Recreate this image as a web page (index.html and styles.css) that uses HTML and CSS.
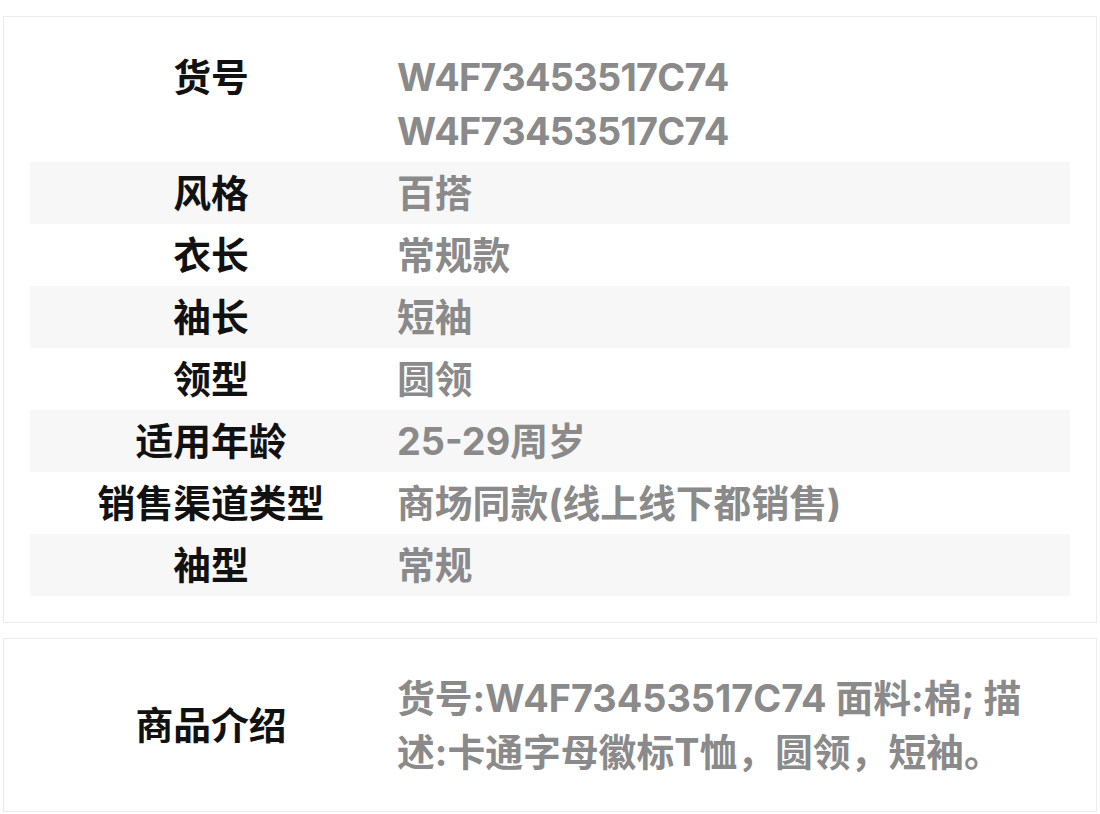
FILE: index.html
```html
<!DOCTYPE html>
<html lang="zh-CN">
<head>
<meta charset="utf-8">
<link rel="stylesheet" href="styles.css">
</head>
<body>
<div class="page">
  <div class="card specs">
    <div class="row">
      <div class="label">货号</div>
      <div class="value latin">W4F73453517C74<br>W4F73453517C74</div>
    </div>
    <div class="row">
      <div class="label">风格</div>
      <div class="value">百搭</div>
    </div>
    <div class="row">
      <div class="label">衣长</div>
      <div class="value">常规款</div>
    </div>
    <div class="row">
      <div class="label">袖长</div>
      <div class="value">短袖</div>
    </div>
    <div class="row">
      <div class="label">领型</div>
      <div class="value">圆领</div>
    </div>
    <div class="row">
      <div class="label">适用年龄</div>
      <div class="value">25-29周岁</div>
    </div>
    <div class="row">
      <div class="label">销售渠道类型</div>
      <div class="value">商场同款(线上线下都销售)</div>
    </div>
    <div class="row">
      <div class="label">袖型</div>
      <div class="value">常规</div>
    </div>
  </div>
  <div class="card intro-card">
    <div class="row intro">
      <div class="label">商品介绍</div>
      <div class="value">货号:W4F73453517C74 面料:棉; 描述:卡通字母徽标T恤，圆领，短袖。</div>
    </div>
  </div>
</div>
</body>
</html>
```
FILE: styles.css
```css
html, body {
  margin: 0;
  padding: 0;
  background: #ffffff;
}
.page {
  padding: 16px 3px;
  display: flex;
  flex-direction: column;
  gap: 15px;
  font-family: "Inter", "Noto Sans CJK SC", sans-serif;
  font-weight: 700;
  font-size: 37.8px;
  line-height: 54px;
}
.card {
  width: 1094px;
  box-sizing: border-box;
  border: 1px solid #ececec;
  background: #fff;
}
.specs {
  padding: 29px 26px 26px;
}
.intro-card {
  padding: 28px 26px;
}
.row {
  display: flex;
  align-items: flex-start;
  padding: 4px 0;
}
.specs .row:nth-child(even) {
  background: #f7f7f7;
}
.intro {
  align-items: center;
}
.label {
  width: 362px;
  flex: none;
  text-align: center;
  color: #111;
}
.value {
  flex: 1;
  padding-left: 5px;
  color: #8a8a8a;
}
.latin {
  letter-spacing: -0.7px;
}
.intro .value {
  padding-right: 40px;
}
```
